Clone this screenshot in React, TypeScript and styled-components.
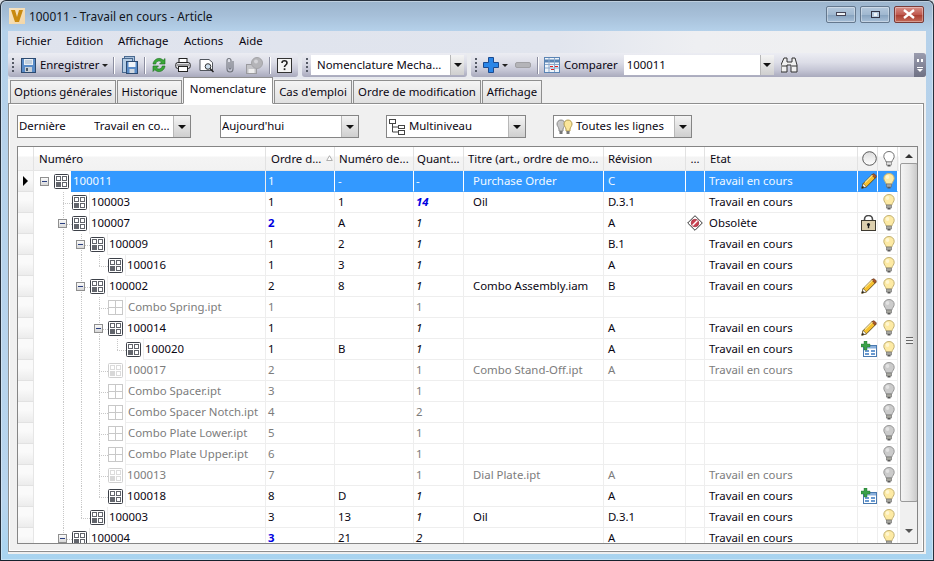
import React from 'react';
import styled, { createGlobalStyle } from 'styled-components';

const Global = createGlobalStyle`
  html, body { margin: 0; padding: 0; background: #d8dde4; }
  body { font-family: "Noto Sans", "Open Sans", sans-serif; font-size: 11.4px; color: #0a0612; }
  * { box-sizing: border-box; }
`;

const Window = styled.div`
  width: 934px; height: 561px; display: flex; flex-direction: column; overflow: hidden;
  border: 1px solid #26303c; border-bottom-color: #16222e; border-radius: 6px 6px 0 0;
  background: linear-gradient(180deg, #9cb5cd 0, #a6bfd8 14px, #b5d1ea 30px, #b8d5ee 500px, #a8d4f0 100%);
  box-shadow: inset 0 0 0 1px rgba(255,255,255,.35);
`;
const TitleBar = styled.div`height: 30px; flex: none; display: flex; align-items: center; padding: 0 9px 0 8px;`;
const AppLogo = styled.div`
  width: 16px; height: 16px; background: linear-gradient(135deg, #f6e4c4, #f3d6a6);
  display: flex; align-items: center; justify-content: center; margin-top: -1px;
`;
const TitleText = styled.div`margin-left: 4px; font-size: 11.9px; color: #10141c; flex: 1; margin-top: -1px; white-space: nowrap;`;
const WinBtn = styled.div<{ $close?: boolean }>`
  width: 30px; height: 17px; margin-left: 4px; margin-top: -4px; border: 1px solid ${p => (p.$close ? '#7a3a36' : '#64788e')}; border-radius: 2px;
  background: ${p => p.$close ? 'linear-gradient(180deg,#d89088,#c05a50 50%,#a83c30 52%,#c46a58)' : 'linear-gradient(180deg,#b4c8dc,#a0b8d0 50%,#86a2be 52%,#a8c0d8)'};
  box-shadow: inset 0 0 0 1px rgba(255,255,255,.35);
  display: flex; align-items: center; justify-content: center;
`;
const Content = styled.div`flex: none; height: 523px; margin: 0 7px; background: #f0f0f0; display: flex; flex-direction: column; overflow: hidden;`;
const MenuBar = styled.div`
  height: 22px; flex: none; display: flex; align-items: center; padding: 0 0 3px 8px;
  background: linear-gradient(90deg, #dfe3ed 0, #e1e5ee 60%, #eeeff2 75%, #f0f0f0 100%);
`;
const MenuItem = styled.span<{ $w: number }>`width: ${p => p.$w}px; flex: none; white-space: nowrap;`;
const ToolRow = styled.div`height: 26px; flex: none; display: flex; gap: 4px; padding-bottom: 2px; background: linear-gradient(90deg, #dfe3ed, #f0f0f0 80%);`;
const ToolBar = styled.div<{ $w?: number }>`
  ${p => (p.$w ? `width:${p.$w}px;flex:none;` : 'flex:1;min-width:0;')}
  height: 24px; display: flex; align-items: center; border-radius: 3px; position: relative;
  background: linear-gradient(180deg, #ecedf3 0, #dcdde7 40%, #c6c7d6 70%, #a9aabd 100%);
`;
const Grip = styled.div`
  width: 2px; height: 14px; margin-left: 4px; flex: none;
  background: repeating-linear-gradient(180deg, #555a66 0 2px, transparent 2px 4px);
`;
const Slot = styled.div<{ $w: number; $ml: number }>`
  width: ${p => p.$w}px; margin-left: ${p => p.$ml}px; flex: none; display: flex; align-items: center; justify-content: center; white-space: nowrap;
`;
const ToolLabel = styled.span<{ $ml: number }>`margin-left: ${p => p.$ml}px; margin-top: -2px; flex: none; white-space: nowrap;`;
const Caret = styled.div<{ $ml: number }>`
  margin-left: ${p => p.$ml}px; flex: none; width: 0; height: 0; border: 3px solid transparent; border-top: 3px solid #222; border-bottom: 0;
`;
const Sep = styled.div<{ $ml: number }>`margin-left: ${p => p.$ml}px; width: 2px; height: 17px; flex: none; background: linear-gradient(90deg,#8c8ea0 50%, #fff 50%);`;
const ToolCombo = styled.div<{ $w: number; $ml: number; $pl: number }>`
  width: ${p => p.$w}px; margin-left: ${p => p.$ml}px; height: 20px; flex: none; background: #fff; display: flex; align-items: center; padding-left: ${p => p.$pl}px; white-space: nowrap;
`;
const ComboText = styled.span`flex: 1; min-width: 0; overflow: hidden; margin-top: -2px;`;
const DropBtn = styled.div<{ $w?: number }>`
  width: ${p => p.$w ?? 14}px; height: 100%; flex: none; display: flex; align-items: center; justify-content: center;
  background: linear-gradient(180deg, #f4f4f4, #cfcfcf); border-left: 1px solid #b8b8b8;
  &::after { content: ''; border: 4px solid transparent; border-top: 4px solid #111; border-bottom: 0; }
`;
const ToolEnd = styled.div`
  position: absolute; right: 0; top: 0; width: 12px; height: 24px; border-radius: 0 3px 3px 0; background: linear-gradient(180deg,#9a9cae,#6f7184);
  display: flex; flex-direction: column; align-items: center; justify-content: space-between; padding: 6px 0 4px; color: #fff;
`;
const Chevrons = styled.div`width: 7px; height: 3px; background: repeating-linear-gradient(90deg,#fff 0 2px, transparent 2px 4px);`;
const EndDrop = styled.div`
  width: 6px; height: 6px; border-top: 1px solid #fff;
  &::after { content: ''; display: block; margin-top: 1px; border: 3px solid transparent; border-top: 3px solid #fff; border-bottom: 0; }
`;
const Tabs = styled.div`height: 25px; flex: none; display: flex; padding-left: 2px; align-items: flex-end; position: relative; z-index: 1; margin-bottom: -1px;`;
const Tab = styled.div<{ $w: number; $active?: boolean }>`
  width: ${p => p.$w}px; height: ${p => (p.$active ? 27 : 24)}px; flex: none; margin-right: 1px; display: flex; align-items: center; justify-content: center;
  border: 1px solid #8e8e8e; white-space: nowrap; padding-bottom: ${p => (p.$active ? 5 : 2)}px;
  ${p => p.$active ? 'background:#fff;border-bottom-color:#fff;margin-top:-3px;' : 'background:linear-gradient(180deg,#f4f4f4,#e0e0e0);'}
`;
const Panel = styled.div`
  width: 916px; height: 449px; flex: none; border: 1px solid #8e8e8e; background: #f0f0f0; box-shadow: inset 0 0 0 1px #fff; padding: 11px 6px 0 8px; display: flex; flex-direction: column;
`;
const Filters = styled.div`height: 23px; flex: none; display: flex;`;
const Combo = styled.div<{ $w: number; $ml: number }>`
  width: ${p => p.$w}px; margin-left: ${p => p.$ml}px; height: 23px; flex: none; border: 1px solid #858585; background: #fff; display: flex; align-items: center; padding-left: 1px; white-space: nowrap;
`;
const ComboLead = styled.span`width: 75px; flex: none; margin-top: -2px;`;
const GridBox = styled.div`
  margin-top: 8px; width: 901px; height: 398px; flex: none; border: 1px solid #858585; background: #fff; display: flex; overflow: hidden;
`;
const GridMain = styled.div`width: 881px; flex: none; display: flex; flex-direction: column; overflow: hidden;`;
const COLS = '16px 232px 69px 79px 50px 140px 82px 19px 153px 20px 20px';
const HeaderRow = styled.div`
  height: 24px; flex: none; display: grid; grid-template-columns: ${COLS}; border-bottom: 1px solid #e6e6e6;
  background: linear-gradient(180deg,#fff 0,#fff 9px,#f4f4f4 10px,#f2f2f2 100%);
`;
const HeaderCell = styled.div<{ $pl?: number; $center?: boolean }>`
  border-right: 1px solid #e2e2e2; padding-left: ${p => p.$pl ?? 3}px; display: flex; align-items: center; overflow: hidden; white-space: nowrap; min-width: 0;
  ${p => (p.$center ? 'justify-content:center;padding-left:0;' : '')}
`;
const SortMark = styled.svg`margin-left: 5px; margin-top: -2px; flex: none;`;
const RowsBox = styled.div`flex: 1; overflow: hidden;`;
const Row = styled.div<{ $sel?: boolean; $ghost?: boolean }>`
  height: 21px; display: grid; grid-template-columns: ${COLS};
  color: ${p => (p.$sel ? '#f2f9ff' : p.$ghost ? '#7c7c7c' : '#0a0612')};
`;
const RowHead = styled.div`
  border-right: 1px solid #e6e6e6; border-bottom: 1px solid #e2e2e2; background: linear-gradient(180deg,#fafafa 40%,#ececec);
  display: flex; align-items: center; justify-content: center;
`;
const Pointer = styled.div`width: 0; height: 0; border: 5px solid transparent; border-left: 5px solid #000; border-right: 0;`;
const TreeCell = styled.div`display: flex; padding-left: 6px; min-width: 0; border-right: 1px solid #eeeeee;`;
const TreeSlot = styled.div<{ $w: number; $v?: 'full' | 'half'; $h?: boolean }>`
  width: ${p => p.$w}px; flex: none; position: relative; display: flex; align-items: center;
  ${p => p.$v ? `&::before { content:''; position:absolute; left:5px; top:0; height:${p.$v === 'full' ? '100%' : '50%'}; border-left:1px dotted #c8c8c8; }` : ''}
  ${p => p.$h ? `&::after { content:''; position:absolute; left:5px; right:0; top:50%; border-top:1px dotted #c8c8c8; }` : ''}
`;
const Expander = styled.div`
  width: 9px; height: 9px; border: 1px solid #8f8f8f; background: linear-gradient(180deg,#fafafa,#d8d8d8); display: flex; align-items: center; justify-content: center; position: relative; z-index: 1;
  &::after { content: ''; width: 5px; height: 1px; background: #2a3f80; }
`;
const IconBox = styled.div`width: 15px; flex: none; display: flex; align-items: center;`;
const NameText = styled.div<{ $sel?: boolean; $file?: boolean }>`
  flex: 1; margin-left: 2px; min-width: 0; display: flex; align-items: center; white-space: nowrap; padding-left: ${p => (p.$file ? 2 : 1)}px;
  border-left: 1px solid #eeeeee; border-bottom: 1px solid #eeeeee;
  ${p => (p.$sel ? 'background:#3399ff;border-color:#3399ff;' : '')}
`;
const Cell = styled.div<{ $pl?: number; $sel?: boolean; $center?: boolean }>`
  border-right: 1px solid ${p => (p.$sel ? '#fff' : '#eeeeee')}; border-bottom: 1px solid #eeeeee; display: flex; align-items: center; white-space: nowrap; overflow: hidden; min-width: 0;
  padding-left: ${p => p.$pl ?? 2}px;
  ${p => (p.$center ? 'justify-content:center;padding-left:0;' : '')}
  ${p => (p.$sel ? 'background:#3399ff;border-bottom-color:#3399ff;' : '')}
`;
const CellText = styled.span<{ $blue?: boolean; $italic?: boolean }>`
  margin-top: -2px;
  font-style: ${p => (p.$italic ? 'italic' : 'normal')};
  ${p => (p.$blue ? 'color:#0000e0;font-weight:700;' : '')}
`;
const Scrollbar = styled.div`
  width: 18px; margin-left: 1px; flex: none; background: #f0f0f0; display: flex; flex-direction: column; align-items: center;
`;
const ArrowUp = styled.div`margin-top: 7px; border: 4px solid transparent; border-bottom: 4px solid #333; border-top: 0; flex: none;`;
const Thumb = styled.div`
  margin-top: 5px; width: 100%; height: 339px; flex: none; border: 1px solid #9a9a9a; border-radius: 2px;
  background: linear-gradient(90deg,#f4f4f4,#e6e6e6 50%,#c9c9c9); display: flex; align-items: center; justify-content: center;
`;
const ThumbGrip = styled.div`width: 7px; height: 7px; background: repeating-linear-gradient(180deg,#666 0 1px,#eee 1px 3px); margin-top: 16px;`;
const ArrowDown = styled.div`margin-top: 27px; border: 4px solid transparent; border-top: 4px solid #555; border-bottom: 0; flex: none;`;

/* ---------- icons ---------- */
const Logo = () => (
  <svg width="12" height="12" viewBox="0 0 12 12"><path d="M0 0h4l2 7 2-7h4L8 12H4z" fill="#c98a10" /></svg>
);
const ItemIcon = ({ ghost }: { ghost?: boolean }) => {
  const s = ghost ? '#cfcfcf' : '#3c4048';
  const f = ghost ? '#d8d8d8' : '#62656c';
  const i = ghost ? '#dcdcdc' : '#62656c';
  return (
    <svg width="15" height="15" viewBox="0 0 15 15">
      <rect x=".5" y=".5" width="14" height="14" rx="1" fill="#fff" stroke={s} />
      <rect x="2.500" y="2.500" width="4" height="4" fill="none" stroke={i} />
      <rect x="8.500" y="2.500" width="4" height="4" fill="none" stroke={i} />
      <rect x="2" y="8" width="5" height="5" fill={f} />
      <rect x="8.500" y="8.500" width="4" height="4" fill="none" stroke={i} />
    </svg>
  );
};
const FileIcon = () => (
  <svg width="15" height="15" viewBox="0 0 15 15">
    <rect x=".5" y=".5" width="14" height="14" fill="#fff" stroke="#c8c8c8" />
    <path d="M7.500 1v13M1 7.500h13" stroke="#c8c8c8" />
  </svg>
);
const Bulb = ({ c }: { c: 'y' | 'g' | 'o' }) => {
  const fill = c === 'y' ? '#fdeaa4' : c === 'g' ? '#cbcbcb' : '#fff';
  const hi = c === 'y' ? '#fff6d0' : c === 'g' ? '#e2e2e2' : '#fff';
  const st = c === 'y' ? '#c2b173' : c === 'g' ? '#979797' : '#707070';
  return (
    <svg width="12" height="16" viewBox="0 0 12 16">
      <path d="M6 .5C3 .5.8 2.600.8 5.300c0 2.400 1.900 3.400 2.400 5.700h5.600c.5-2.300 2.400-3.300 2.400-5.700C11.200 2.600 9 .5 6 .5z" fill={fill} stroke={st} />
      <ellipse cx="4.500" cy="4" rx="1.800" ry="2" fill={hi} />
      <rect x="3.500" y="11" width="5" height="3" fill={c === 'o' ? '#e4e4e4' : '#a8a8a0'} stroke="#6a6a6a" strokeWidth=".6" />
      <rect x="4.500" y="14" width="3" height="1.500" fill="#5a5a5a" />
    </svg>
  );
};
const Pencil = () => (
  <svg width="16" height="16" viewBox="0 0 16 16">
    <path d="M.8 15.200l1.400-4.700L11.400 1.300l3.300 3.300-9.200 9.200z" fill="#f6c02e" stroke="#5a4414" strokeWidth=".9" />
    <path d="M11.400 1.300c.8-.8 1.600-.8 2.300-.1l1.100 1.100c.7.700.7 1.500-.1 2.300l-.7.700-3.300-3.300z" fill="#a8562a" stroke="#5a3014" strokeWidth=".6" />
    <path d="M2.200 10.500l3.300 3.300-4.700 1.400z" fill="#fff" stroke="#5a4414" strokeWidth=".6" />
    <path d="M1.700 12.700l1.600 1.600-2.500.9z" fill="#111" />
    <path d="M4 9.700l7.500-7.500" stroke="#fdeb9c" strokeWidth="1.100" />
  </svg>
);
const Lock = () => (
  <svg width="15" height="16" viewBox="0 0 15 16">
    <path d="M3.500 6.500V4.500a4 4 0 018 0v2" fill="none" stroke="#4a4a4a" strokeWidth="1.600" />
    <rect x=".5" y="5.500" width="14" height="10" fill="#dccfae" stroke="#3e3a30" />
    <circle cx="7.500" cy="9.500" r="1.500" fill="#1c1c1c" /><rect x="6.800" y="10" width="1.400" height="3.200" fill="#1c1c1c" />
  </svg>
);
const AddIcon = () => (
  <svg width="16" height="16" viewBox="0 0 16 16">
    <rect x="2.500" y="4.500" width="13" height="11" fill="#fff" stroke="#4a7ab0" />
    <rect x="3" y="5" width="12" height="2.500" fill="#8ab0dc" />
    <rect x="4" y="9" width="4" height="2" fill="#6a9ad0" /><rect x="10" y="9" width="4" height="2" fill="#6a9ad0" />
    <rect x="4" y="12" width="4" height="2" fill="#6a9ad0" /><rect x="10" y="12" width="4" height="2" fill="#6a9ad0" />
    <path d="M3 0h3v3h3v3H6v3H3V6H0V3h3z" fill="#3aa048" stroke="#1c6a28" strokeWidth=".4" />
  </svg>
);
const Obsolete = () => (
  <svg width="16" height="16" viewBox="0 0 16 16">
    <path d="M8 .7L15.300 8 8 15.300.7 8z" fill="#fff" stroke="#333" />
    <circle cx="8" cy="8" r="3.800" fill="#c84050" stroke="#8a2030" strokeWidth=".6" />
    <path d="M5.500 10.500l5-5" stroke="#fff" strokeWidth="1.400" />
  </svg>
);
const Ring = () => (
  <svg width="15" height="15" viewBox="0 0 15 15">
    <defs><linearGradient id="ring" x1="0" y1="0" x2="0" y2="1"><stop offset="0" stopColor="#dcdcdc" /><stop offset="1" stopColor="#ffffff" /></linearGradient></defs>
    <circle cx="7.500" cy="7.500" r="6.800" fill="url(#ring)" stroke="#5a5a5a" />
  </svg>
);
const Floppy = () => (
  <svg width="15" height="16" viewBox="0 0 15 16">
    <rect x=".5" y="1.500" width="14" height="14" fill="#5a8cc8" stroke="#2c4a70" />
    <rect x="3" y="2" width="9" height="6" fill="#e8eef4" /><path d="M4 4h7M4 6h7" stroke="#a0b4c8" />
    <rect x="4" y="10" width="7" height="5" fill="#c8d0d8" /><rect x="5" y="11" width="2" height="3" fill="#4a5a6a" />
  </svg>
);
const CopyDocs = () => (
  <svg width="17" height="18" viewBox="0 0 17 18">
    <rect x="3.500" y=".5" width="10" height="5" fill="#a8c0dc" stroke="#4a6a90" />
    <rect x="1.500" y="2.500" width="10" height="14" fill="#b4cce4" stroke="#4a6a90" />
    <rect x="5.500" y="5.500" width="11" height="12" fill="#5a8cc8" stroke="#2c4a70" />
    <rect x="7.500" y="6" width="7" height="5" fill="#f2f6fa" /><rect x="8.500" y="13" width="5" height="4" fill="#d0d8e0" />
  </svg>
);
const Refresh = () => (
  <svg width="16" height="16" viewBox="0 0 16 16">
    <path d="M2 7C2.500 3 6 1 9 1.500c1.500.3 2.500 1 3.200 1.800L14 1.500V7H8.500l2-2C9.500 4 8 3.800 6.800 4.300 5.500 4.800 5 5.800 4.800 7z" fill="#3aa838" stroke="#1a6a1c" strokeWidth=".6" />
    <path d="M14 9c-.5 4-4 6-7 5.500-1.500-.3-2.500-1-3.200-1.800L2 14.500V9h5.500l-2 2c1 1 2.500 1.200 3.700.7 1.300-.5 1.800-1.500 2-2.700z" fill="#3aa838" stroke="#1a6a1c" strokeWidth=".6" />
  </svg>
);
const Printer = () => (
  <svg width="16" height="16" viewBox="0 0 16 16">
    <rect x="4" y="1.500" width="8" height="5" fill="#fff" stroke="#222" />
    <rect x=".8" y="5.500" width="14.400" height="6" rx="2" fill="#e4e4e8" stroke="#222" />
    <rect x="3.500" y="9.500" width="9" height="5" fill="#fff" stroke="#222" />
    <path d="M2 8h12" stroke="#555" />
  </svg>
);
const Preview = () => (
  <svg width="16" height="16" viewBox="0 0 16 16">
    <path d="M1 2.500h9l3.500 3v8H1z" fill="#fff" stroke="#50545c" />
    <circle cx="9" cy="9.500" r="2.800" fill="#cfe0ee" stroke="#333" />
    <path d="M11 11.500l3.500 3.500" stroke="#222" strokeWidth="1.500" />
  </svg>
);
const Clip = () => (
  <svg width="10" height="16" viewBox="0 0 10 16">
    <path d="M8 4v8a3 3 0 01-6 0V3.500a2 2 0 014 0V11a.8.8 0 01-2 0V5" fill="none" stroke="#70747c" strokeWidth="1.100" />
  </svg>
);
const DiskBall = () => (
  <svg width="17" height="17" viewBox="0 0 17 17">
    <rect x=".5" y="7.500" width="10" height="9" fill="#c4c4c8" stroke="#9a9a9e" />
    <rect x="2.500" y="12" width="6" height="4" fill="#eee" />
    <circle cx="11" cy="6" r="5.500" fill="#b4b4b8" stroke="#a4a4a8" />
    <circle cx="10" cy="4.500" r="2" fill="#d4d4d8" />
  </svg>
);
const Help = () => (
  <svg width="15" height="15" viewBox="0 0 15 15">
    <rect x=".5" y=".5" width="14" height="14" fill="#f4f4f4" stroke="#333" />
    <path d="M5 5c0-3 5-3 5 0 0 2-2.500 2-2.500 4" fill="none" stroke="#222" strokeWidth="1.600" />
    <rect x="6.700" y="10.300" width="1.700" height="1.800" fill="#222" />
  </svg>
);
const TreeIcon = () => (
  <svg width="16" height="16" viewBox="0 0 16 16">
    <rect x=".5" y=".5" width="6" height="4" fill="#fff" stroke="#444" />
    <rect x="9.500" y="6.500" width="6" height="3" fill="#fff" stroke="#444" />
    <rect x="9.500" y="11.500" width="6" height="4" fill="#fff" stroke="#444" />
    <path d="M3.500 5v8h6M3.500 8h6" fill="none" stroke="#444" />
  </svg>
);
const BulbPair = () => (
  <svg width="18" height="16" viewBox="0 0 18 16">
    <path d="M5 1C2.500 1 1 3 1 5c0 2 1.500 3 2 5v2h4v-2c.5-2 2-3 2-5 0-2-1.500-4-4-4z" fill="#c8c8c8" stroke="#8a8a8a" />
    <rect x="3.500" y="12" width="3" height="3" fill="#777" />
    <path d="M12 1C9.500 1 8 3 8 5c0 2 1.500 3 2 5v2h4v-2c.5-2 2-3 2-5 0-2-1.500-4-4-4z" fill="#fbe69a" stroke="#b09a50" />
    <rect x="10.500" y="12" width="3" height="3" fill="#777" />
  </svg>
);
const Plus = () => (
  <svg width="16" height="16" viewBox="0 0 16 16">
    <path d="M5.500 .5h5v5h5v5h-5v5h-5v-5h-5v-5h5z" fill="#2a86e8" stroke="#1a4a90" />
  </svg>
);
const Minus = () => (
  <svg width="16" height="6" viewBox="0 0 16 6"><rect x=".5" y=".5" width="15" height="5" rx="1.500" fill="#b4b4b8" stroke="#a0a0a4" /></svg>
);
const Compare = () => (
  <svg width="16" height="16" viewBox="0 0 16 16">
    <rect x=".5" y=".5" width="15" height="15" fill="#eef4fa" stroke="#5a84b4" />
    <path d="M1 4h14" stroke="#5a84b4" strokeWidth="3" />
    <path d="M1 7.500h14M1 11h14M5 1v14M10.500 1v14" stroke="#8aa8cc" />
    <path d="M6 9.500h3M11 9.500h3M7 12.500h3" stroke="#e02020" />
  </svg>
);
const Binoc = () => (
  <svg width="17" height="16" viewBox="0 0 17 16">
    <path d="M3 1h3v4h5V1h3l2 7v7h-6V8H6v7H0V8z" fill="#f0f0f0" stroke="#333" strokeWidth="1" />
    <path d="M1 9h5M11 9h5" stroke="#333" />
  </svg>
);

/* ---------- data ---------- */
type R = {
  l: number; name: string; kind?: 'item' | 'ghost' | 'file'; ex?: boolean; order: string; orderBlue?: boolean;
  pos?: string; qty: string; qtyBlue?: boolean; title?: string; rev?: string; obs?: boolean; etat?: string; mark?: 'pencil' | 'lock' | 'add';
};
const T = 'Travail en cours';
const rows: R[] = [
  { l: 0, name: '100011', ex: true, order: '1', pos: '-', qty: '-', title: 'Purchase Order', rev: 'C', etat: T, mark: 'pencil' },
  { l: 1, name: '100003', order: '1', pos: '1', qty: '14', qtyBlue: true, title: 'Oil', rev: 'D.3.1', etat: T },
  { l: 1, name: '100007', ex: true, order: '2', orderBlue: true, pos: 'A', qty: '1', rev: 'A', obs: true, etat: 'Obsolète', mark: 'lock' },
  { l: 2, name: '100009', ex: true, order: '1', pos: '2', qty: '1', rev: 'B.1', etat: T },
  { l: 3, name: '100016', order: '1', pos: '3', qty: '1', rev: 'A', etat: T },
  { l: 2, name: '100002', ex: true, order: '2', pos: '8', qty: '1', title: 'Combo Assembly.iam', rev: 'B', etat: T, mark: 'pencil' },
  { l: 3, name: 'Combo Spring.ipt', kind: 'file', order: '1', qty: '1' },
  { l: 3, name: '100014', ex: true, order: '1', qty: '1', rev: 'A', etat: T, mark: 'pencil' },
  { l: 4, name: '100020', order: '1', pos: 'B', qty: '1', rev: 'A', etat: T, mark: 'add' },
  { l: 3, name: '100017', kind: 'ghost', order: '2', qty: '1', title: 'Combo Stand-Off.ipt', rev: 'A', etat: T },
  { l: 3, name: 'Combo Spacer.ipt', kind: 'file', order: '3', qty: '1' },
  { l: 3, name: 'Combo Spacer Notch.ipt', kind: 'file', order: '4', qty: '2' },
  { l: 3, name: 'Combo Plate Lower.ipt', kind: 'file', order: '5', qty: '1' },
  { l: 3, name: 'Combo Plate Upper.ipt', kind: 'file', order: '6', qty: '1' },
  { l: 3, name: '100013', kind: 'ghost', order: '7', qty: '1', title: 'Dial Plate.ipt', rev: 'A', etat: T },
  { l: 3, name: '100018', order: '8', pos: 'D', qty: '1', rev: 'A', etat: T, mark: 'add' },
  { l: 2, name: '100003', order: '3', pos: '13', qty: '1', title: 'Oil', rev: 'D.3.1', etat: T },
  { l: 1, name: '100004', ex: true, order: '3', orderBlue: true, pos: '21', qty: '2', rev: 'A', etat: T },
];

const hasLaterSibling = (i: number, k: number) => {
  for (let j = i + 1; j < rows.length; j++) {
    if (rows[j].l === k) return true;
    if (rows[j].l < k) return false;
  }
  return k === 1;
};

const TreePart = ({ r, i }: { r: R; i: number }) => {
  const slots = [];
  for (let k = 0; k < r.l; k++) {
    slots.push(<TreeSlot key={k} $w={18} $v={k > 0 && hasLaterSibling(i, k) ? 'full' : undefined} />);
  }
  const own = r.l > 0 ? (hasLaterSibling(i, r.l) ? 'full' : 'half') : undefined;
  return (
    <TreeCell>
      {slots}
      <TreeSlot $w={14} $v={own} $h={r.l > 0}>{r.ex && <Expander />}</TreeSlot>
      <IconBox>{r.kind === 'file' ? <FileIcon /> : <ItemIcon ghost={r.kind === 'ghost'} />}</IconBox>
      <NameText $sel={i === 0} $file={r.kind === 'file'}><CellText>{r.name}</CellText></NameText>
    </TreeCell>
  );
};

const markIcon = (m?: R['mark']) => (m === 'pencil' ? <Pencil /> : m === 'lock' ? <Lock /> : m === 'add' ? <AddIcon /> : null);

export default function App() {
  return (
    <>
      <Global />
      <Window>
        <TitleBar>
          <AppLogo><Logo /></AppLogo>
          <TitleText>100011 - Travail en cours - Article</TitleText>
          <WinBtn><svg width="10" height="4"><rect x=".5" y=".5" width="9" height="3" fill="#eef2f6" stroke="#445" /></svg></WinBtn>
          <WinBtn><svg width="9" height="7"><rect x=".5" y=".5" width="8" height="6" fill="#b8cce0" stroke="#334" /><rect x="3" y="2" width="3" height="3" fill="#eef2f6" /></svg></WinBtn>
          <WinBtn $close><svg width="12" height="10"><path d="M1 1l10 8M11 1L1 9" stroke="#fff" strokeWidth="2.400" /></svg></WinBtn>
        </TitleBar>
        <Content>
          <MenuBar>
            <MenuItem $w={50}>Fichier</MenuItem>
            <MenuItem $w={52}>Edition</MenuItem>
            <MenuItem $w={66}>Affichage</MenuItem>
            <MenuItem $w={55}>Actions</MenuItem>
            <MenuItem $w={40}>Aide</MenuItem>
          </MenuBar>
          <ToolRow>
            <ToolBar $w={290}>
              <Grip />
              <Slot $w={15} $ml={7}><Floppy /></Slot>
              <ToolLabel $ml={4}>Enregistrer</ToolLabel>
              <Caret $ml={3} />
              <Sep $ml={5} />
              <Slot $w={17} $ml={6}><CopyDocs /></Slot>
              <Sep $ml={6} />
              <Slot $w={16} $ml={5}><Refresh /></Slot>
              <Slot $w={16} $ml={8}><Printer /></Slot>
              <Slot $w={16} $ml={8}><Preview /></Slot>
              <Slot $w={10} $ml={10}><Clip /></Slot>
              <Slot $w={17} $ml={11}><DiskBall /></Slot>
              <Sep $ml={6} />
              <Slot $w={15} $ml={6}><Help /></Slot>
            </ToolBar>
            <ToolBar $w={165}>
              <Grip />
              <ToolCombo $w={153} $ml={3} $pl={6}><ComboText>Nomenclature Mecha...</ComboText><DropBtn /></ToolCombo>
            </ToolBar>
            <ToolBar>
              <Grip />
              <Slot $w={16} $ml={6}><Plus /></Slot>
              <Caret $ml={3} />
              <Slot $w={16} $ml={7}><Minus /></Slot>
              <Sep $ml={6} />
              <Slot $w={16} $ml={5}><Compare /></Slot>
              <ToolLabel $ml={4}>Comparer</ToolLabel>
              <ToolCombo $w={150} $ml={6} $pl={3}><ComboText>100011</ComboText><DropBtn /></ToolCombo>
              <Slot $w={17} $ml={7}><Binoc /></Slot>
              <ToolEnd><Chevrons /><EndDrop /></ToolEnd>
            </ToolBar>
          </ToolRow>
          <Tabs>
            <Tab $w={106}>Options générales</Tab>
            <Tab $w={65}>Historique</Tab>
            <Tab $w={90} $active>Nomenclature</Tab>
            <Tab $w={78}>Cas d'emploi</Tab>
            <Tab $w={128}>Ordre de modification</Tab>
            <Tab $w={60}>Affichage</Tab>
          </Tabs>
          <Panel>
            <Filters>
              <Combo $w={174} $ml={0}><ComboLead>Dernière</ComboLead><ComboText>Travail en co...</ComboText><DropBtn $w={17} /></Combo>
              <Combo $w={139} $ml={29}><ComboText>Aujourd'hui</ComboText><DropBtn $w={17} /></Combo>
              <Combo $w={140} $ml={27}><Slot $w={16} $ml={1}><TreeIcon /></Slot><ToolLabel $ml={4}>Multiniveau</ToolLabel><ComboText /><DropBtn $w={17} /></Combo>
              <Combo $w={139} $ml={27}><Slot $w={18} $ml={1}><BulbPair /></Slot><ToolLabel $ml={2}>Toutes les lignes</ToolLabel><ComboText /><DropBtn $w={17} /></Combo>
            </Filters>
            <GridBox>
              <GridMain>
                <HeaderRow>
                  <HeaderCell />
                  <HeaderCell $pl={5}>Numéro</HeaderCell>
                  <HeaderCell $pl={5}>Ordre d...<SortMark width="7" height="6" viewBox="0 0 7 6"><path d="M3.500 .7L6.300 5.500H.7z" fill="#fff" stroke="#9a9a9a" strokeWidth=".8" /></SortMark></HeaderCell>
                  <HeaderCell $pl={4}>Numéro de...</HeaderCell>
                  <HeaderCell>Quant...</HeaderCell>
                  <HeaderCell $pl={4}>Titre (art., ordre de mo...</HeaderCell>
                  <HeaderCell $pl={4}>Révision</HeaderCell>
                  <HeaderCell $center>...</HeaderCell>
                  <HeaderCell $pl={5}>Etat</HeaderCell>
                  <HeaderCell $pl={4}><Ring /></HeaderCell>
                  <HeaderCell $pl={5}><Bulb c="o" /></HeaderCell>
                </HeaderRow>
                <RowsBox>
                  {rows.map((r, i) => {
                    const sel = i === 0;
                    const ghost = r.kind === 'ghost' || r.kind === 'file';
                    return (
                      <Row key={i} $sel={sel} $ghost={ghost}>
                        <RowHead>{sel && <Pointer />}</RowHead>
                        <TreePart r={r} i={i} />
                        <Cell $sel={sel}><CellText $blue={r.orderBlue}>{r.order}</CellText></Cell>
                        <Cell $sel={sel} $pl={3}><CellText>{r.pos}</CellText></Cell>
                        <Cell $sel={sel}><CellText $blue={r.qtyBlue} $italic={!ghost && !sel}>{r.qty}</CellText></Cell>
                        <Cell $sel={sel} $pl={9}><CellText>{r.title}</CellText></Cell>
                        <Cell $sel={sel} $pl={4}><CellText>{r.rev}</CellText></Cell>
                        <Cell $sel={sel} $center>{r.obs && <Obsolete />}</Cell>
                        <Cell $sel={sel} $pl={4}><CellText>{r.etat}</CellText></Cell>
                        <Cell $sel={sel} $pl={3}>{markIcon(r.mark)}</Cell>
                        <Cell $sel={sel} $pl={5}><Bulb c={ghost ? 'g' : 'y'} /></Cell>
                      </Row>
                    );
                  })}
                </RowsBox>
              </GridMain>
              <Scrollbar>
                <ArrowUp />
                <Thumb><ThumbGrip /></Thumb>
                <ArrowDown />
              </Scrollbar>
            </GridBox>
          </Panel>
        </Content>
      </Window>
    </>
  );
}
